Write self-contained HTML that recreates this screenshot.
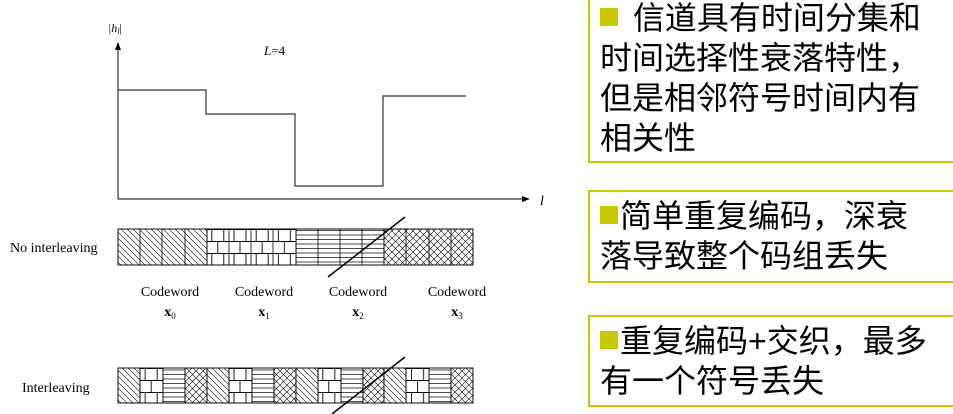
<!DOCTYPE html>
<html><head><meta charset="utf-8"><style>
body{margin:0;width:953px;height:414px;background:#fff;position:relative;overflow:hidden;font-family:"Liberation Serif",serif}
.box{position:absolute;left:588px;width:380px;border:2px solid #c8c800;box-sizing:border-box;font-family:"Liberation Sans","Noto Sans CJK SC",sans-serif;font-size:32px;line-height:40px;color:#000;padding-left:10px;white-space:nowrap}
.sq{display:inline-block;width:18px;height:18px;background:#c8c800;margin-right:6px;vertical-align:3px}
</style></head><body>
<svg width="953" height="414" style="position:absolute;left:0;top:0" font-family="Liberation Serif, serif">
<defs>
<pattern id="d" width="6" height="6" patternUnits="userSpaceOnUse"><path d="M-1,-1 L7,7 M-4,2 L2,8 M2,-4 L8,2" stroke="#000" stroke-width="0.6"/></pattern>
<pattern id="h" width="6" height="4.5" patternUnits="userSpaceOnUse"><path d="M0,1 H6" stroke="#000" stroke-width="0.7"/></pattern>
<pattern id="c" width="7" height="7" patternUnits="userSpaceOnUse"><path d="M0,0 L7,7 M7,0 L0,7" stroke="#000" stroke-width="0.6"/></pattern>
<pattern id="b" x="118" y="229" width="22.2" height="24" patternUnits="userSpaceOnUse"><path d="M0,0.5 H23 M0,12.5 H23 M5,0 V12 M17,0 V12 M11,12 V24" stroke="#000" stroke-width="0.9" fill="none"/></pattern>
<pattern id="b2" x="118" y="368" width="22.2" height="24" patternUnits="userSpaceOnUse"><path d="M0,0.5 H23 M0,12.5 H23 M5,0 V12 M17,0 V12 M11,12 V24" stroke="#000" stroke-width="0.9" fill="none"/></pattern>
</defs>
<g stroke="#333" fill="none" stroke-width="1.2">
<line x1="118" y1="199" x2="118" y2="48"/><line x1="118" y1="199" x2="524" y2="199"/>
<polyline points="118,90 206,90 206,114 295,114 295,186 383,186 383,96 466,96"/>
</g>
<path d="M118,42 L115,50 L121,50Z M530,199 L522,196 L522,202Z" fill="#000"/>
<text x="108" y="32" font-size="12" font-style="italic">|h<tspan font-size="8" dy="2">l</tspan><tspan dy="-2" font-style="normal">|</tspan></text>
<text x="264" y="55" font-size="13"><tspan font-style="italic">L</tspan>=4</text>
<text x="540" y="205" font-size="14" font-style="italic">l</text>
<text x="10" y="252" font-size="14">No interleaving</text>
<text x="22" y="392" font-size="14">Interleaving</text>
<g stroke="#000" stroke-width="0.8">
<rect x="118" y="229" width="89" height="36" fill="url(#d)"/>
<rect x="207" y="229" width="89" height="36" fill="url(#b)"/>
<rect x="296" y="229" width="88" height="36" fill="url(#h)"/>
<rect x="384" y="229" width="89" height="36" fill="url(#c)"/>
<path d="M140,229V265M162,229V265M185,229V265M229,229V265M251,229V265M273,229V265M318,229V265M340,229V265M362,229V265M406,229V265M429,229V265M451,229V265" fill="none"/>
<rect x="118" y="229" width="355" height="36" fill="none"/>
</g>
<g stroke="#000" stroke-width="0.8">
<rect x="118" y="368" width="22" height="35" fill="url(#d)"/><rect x="140" y="368" width="23" height="35" fill="url(#b2)"/><rect x="163" y="368" width="22" height="35" fill="url(#h)"/><rect x="185" y="368" width="22" height="35" fill="url(#c)"/>
<rect x="207" y="368" width="22" height="35" fill="url(#d)"/><rect x="229" y="368" width="23" height="35" fill="url(#b2)"/><rect x="252" y="368" width="22" height="35" fill="url(#h)"/><rect x="274" y="368" width="22" height="35" fill="url(#c)"/>
<rect x="296" y="368" width="22" height="35" fill="url(#d)"/><rect x="318" y="368" width="23" height="35" fill="url(#b2)"/><rect x="341" y="368" width="22" height="35" fill="url(#h)"/><rect x="363" y="368" width="21" height="35" fill="url(#c)"/>
<rect x="384" y="368" width="22" height="35" fill="url(#d)"/><rect x="406" y="368" width="23" height="35" fill="url(#b2)"/><rect x="429" y="368" width="22" height="35" fill="url(#h)"/><rect x="451" y="368" width="22" height="35" fill="url(#c)"/>
<rect x="118" y="368" width="355" height="35" fill="none"/>
</g>
<line x1="328" y1="277" x2="405" y2="217" stroke="#000" stroke-width="1.5"/>
<line x1="332" y1="414" x2="405" y2="357" stroke="#000" stroke-width="1.5"/>
<g font-size="14" text-anchor="middle">
<text x="170" y="296">Codeword</text><text x="264" y="296">Codeword</text><text x="358" y="296">Codeword</text><text x="457" y="296">Codeword</text>
<text x="170" y="316" font-weight="bold">x<tspan font-size="9" font-weight="normal" dy="3">0</tspan></text>
<text x="264" y="316" font-weight="bold">x<tspan font-size="9" font-weight="normal" dy="3">1</tspan></text>
<text x="358" y="316" font-weight="bold">x<tspan font-size="9" font-weight="normal" dy="3">2</tspan></text>
<text x="457" y="316" font-weight="bold">x<tspan font-size="9" font-weight="normal" dy="3">3</tspan></text>
</g>
</svg>
<div class="box" style="top:-4px;height:167px;padding-top:0">
<span class="sq"></span> 信道具有时间分集和<br>时间选择性衰落特性，<br>但是相邻符号时间内有<br>相关性</div>
<div class="box" style="top:190px;height:93px;padding-top:4px">
<span class="sq" style="margin-right:2px"></span>简单重复编码，深衰<br>落导致整个码组丢失</div>
<div class="box" style="top:315px;height:92px;padding-top:4px">
<span class="sq" style="margin-right:2px"></span>重复编码+交织，最多<br>有一个符号丢失</div>
</body></html>
